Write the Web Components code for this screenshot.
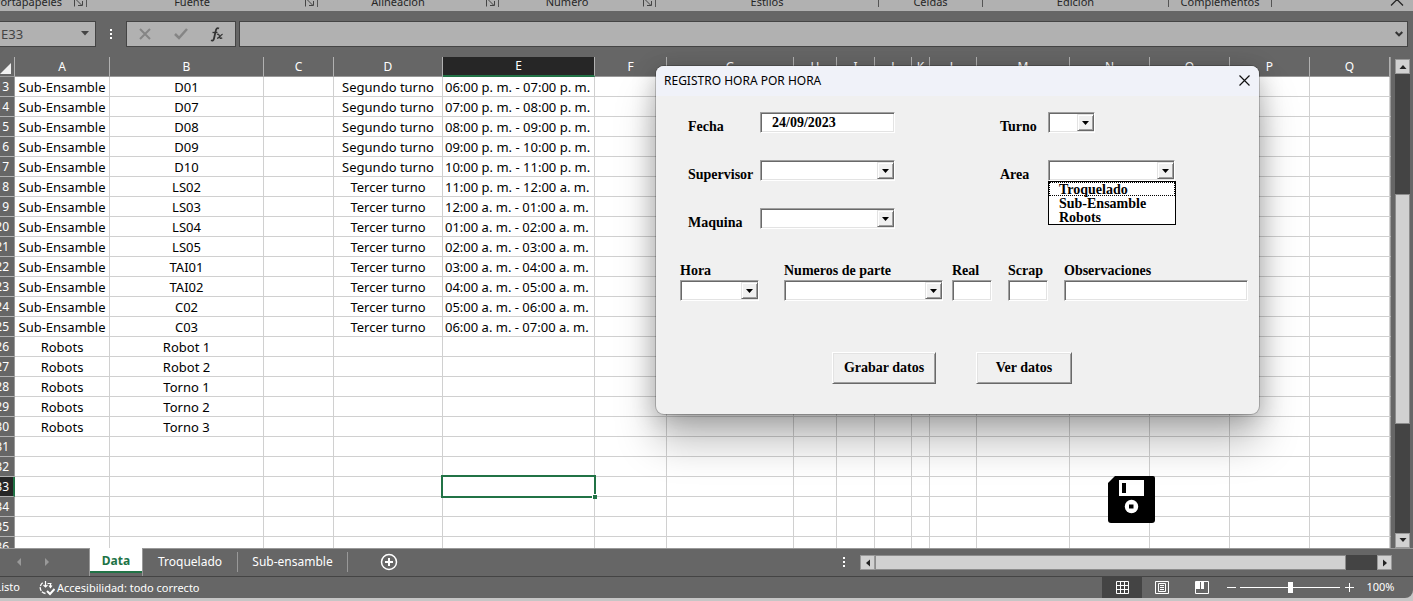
<!DOCTYPE html>
<html lang="es">
<head>
<meta charset="utf-8">
<title>Registro hora por hora</title>
<style>
  html, body { margin: 0; height: 100%; }
  body { background: #c6c6c6; overflow: hidden; font-family: "Noto Sans", "Open Sans", sans-serif; }
</style>
</head>
<body>
<xl-window>
  <xl-ribbon slot="ribbon">
    <xl-group style="--w:87px" launcher class="first">Portapapeles</xl-group>
    <xl-group style="--w:231px" launcher>Fuente</xl-group>
    <xl-group style="--w:181px" launcher>Alineación</xl-group>
    <xl-group style="--w:157px" launcher>Número</xl-group>
    <xl-group style="--w:223px">Estilos</xl-group>
    <xl-group style="--w:104px">Celdas</xl-group>
    <xl-group style="--w:186px">Edición</xl-group>
    <xl-group style="--w:103px">Complementos</xl-group>
  </xl-ribbon>
  <xl-formula-bar slot="formula"></xl-formula-bar>
  <xl-sheet slot="sheet"></xl-sheet>
  <xl-tabs slot="tabs"></xl-tabs>
  <xl-status slot="status"></xl-status>
  <user-form slot="dialog" heading="REGISTRO HORA POR HORA">
    <form-field slot="main" label="Fecha" kind="text" value="24/09/2023" style="--w:135px"></form-field>
    <form-field slot="main" label="Turno" kind="combo" style="--w:47px;--lw:48px"></form-field>
    <form-field slot="main" label="Supervisor" kind="combo" style="--w:135px"></form-field>
    <form-field slot="main" label="Area" kind="combo" options="Troquelado,Sub-Ensamble,Robots" style="--w:127px;--lw:48px"></form-field>
    <form-field slot="main" label="Maquina" kind="combo" style="--w:135px"></form-field>
    <form-field slot="row" stacked label="Hora" kind="combo" style="--w:79px"></form-field>
    <form-field slot="row" stacked label="Numeros de parte" kind="combo" style="--w:159px"></form-field>
    <form-field slot="row" stacked label="Real" kind="text" style="--w:40px"></form-field>
    <form-field slot="row" stacked label="Scrap" kind="text" style="--w:40px"></form-field>
    <form-field slot="row" stacked label="Observaciones" kind="text" style="--w:184px"></form-field>
    <form-button slot="actions" style="--w:104px">Grabar datos</form-button>
    <form-button slot="actions" style="--w:96px">Ver datos</form-button>
  </user-form>
</xl-window>

<script>
const define = (name, html, setup) => {
  const template = document.createElement('template');
  template.innerHTML = html;
  customElements.define(name, class extends HTMLElement {
    constructor() {
      super();
      this.attachShadow({ mode: 'open' }).append(template.content.cloneNode(true));
    }
    connectedCallback() {
      if (setup && !this.ready) { this.ready = true; setup(this, this.shadowRoot); }
    }
  });
};

define('xl-window', `
<style>
  :host { display: flex; flex-direction: column; height: calc(100vh - 3px); position: relative;
    background: #666; border-radius: 0 0 8px 0; overflow: hidden; }
  .sheet { flex: 1; min-height: 0; display: flex; }
  ::slotted([slot=sheet]) { flex: 1; min-width: 0; }
  ::slotted([slot=dialog]) { position: absolute; left: 656px; top: 66px; }
</style>
<slot name="ribbon"></slot>
<slot name="formula"></slot>
<div class="sheet"><slot name="sheet"></slot></div>
<slot name="tabs"></slot>
<slot name="status"></slot>
<slot name="dialog"></slot>`);

define('xl-ribbon', `
<style>
  :host { display: flex; align-items: flex-end; height: 11px; background: #b1b1b1; overflow: hidden; flex: none; }
  .grow { flex: 1; }
  button { all: unset; display: block; width: 24px; height: 8px; margin-right: 4px; align-self: flex-start; }
  svg { display: block; }
</style>
<slot></slot><span class="grow"></span>
<button aria-label="Contraer la cinta"><svg width="24" height="8"><path d="M6 5.500L12 -.5l6 6" fill="none" stroke="#262626" stroke-width="1.300"/></svg></button>`);

define('xl-group', `
<style>
  :host { display: flex; box-sizing: border-box; flex: none; width: var(--w); height: 18px; align-items: center;
    font-size: 11px; line-height: 16px; color: #262626; position: relative; }
  .label { flex: 1; text-align: center; white-space: nowrap; }
  :host(.first) .label { display: flex; justify-content: flex-end; width: 0; }
  button { all: unset; display: none; width: 20px; height: 20px; }
  :host([launcher]) button { display: block; }
  :host(.first) button { width: 24px; }
  :host(.first) svg { margin-left: 4px; }
  i { width: 1px; height: 7px; margin-bottom: 4px; align-self: flex-end; background: #555; }
  svg { display: block; }
</style>
<span class="label"><slot></slot></span>
<button aria-label="Más opciones"><svg width="20" height="20"><path d="M8.500 14.500V7M10.500 8l5 5M16.500 9v4.500H12" fill="none" stroke="#444"/></svg></button><i></i>`);

define('xl-formula-bar', `
<style>
  :host { display: flex; flex: none; height: 26px; padding: 10px 5px 10px 0; }
  .name { display: flex; width: 96px; box-sizing: border-box; background: #b1b1b1; border: 1px solid #444; border-left: 0;
    align-items: center; }
  input { all: unset; box-sizing: border-box; font-size: 13px; line-height: 20px; color: #444; min-width: 0; width: 75px; padding-left: 1px; }
  button { all: unset; display: grid; place-items: center; }
  .name button { width: 20px; height: 20px; }
  .dots { display: block; margin: 0 14px; }
  .tools { display: flex; box-sizing: border-box; width: 110px; background: #b1b1b1; border: 1px solid #444; align-items: center; justify-content: space-around; margin-right: 3px; }
  .tools button { width: 36px; height: 24px; }
  .field { display: flex; flex: 1; border: 1px solid #444; background: #b1b1b1; }
  .field input { flex: 1; }
  .field button { width: 16px; }
</style>
<div class="name"><input aria-label="Cuadro de nombres" value="E33"><button aria-label="Lista de nombres"><svg width="8" height="6"><path d="M0 0h8L4 4.500z" fill="#444"/></svg></button></div>
<svg class="dots" width="2" height="26"><path d="M0 9h2M0 13h2M0 17h2" stroke="#fff" stroke-width="2"/></svg>
<div class="tools">
  <button aria-label="Cancelar"><svg width="12" height="12"><path d="M1 1l10 10M11 1L1 11" stroke="#858585" stroke-width="2"/></svg></button>
  <button aria-label="Introducir"><svg width="14" height="12"><path d="M1 6l4 4 8-9" fill="none" stroke="#858585" stroke-width="2.500"/></svg></button>
  <button aria-label="Insertar función"><svg width="14" height="15" fill="none" stroke="#333"><path d="M9 1.500C7 .3 6 2 5.700 4L4 11.500C3.600 13.500 2.500 14 1 13.300" stroke-width="1.800"/><path d="M2.500 5.500h5" stroke-width="1.300"/><path d="M7 7.500c1.500-1 2 0 2.500 2s1.300 2.500 2.700 1.300M12.700 7.300c-2-.3-2.500 4-5.700 4" stroke-width="1.300"/></svg></button>
</div>
<div class="field"><input aria-label="Barra de fórmulas"><button aria-label="Expandir"><svg width="8" height="6"><path d="M.7 1L4 4.300 7.300 1" fill="none" stroke="#333" stroke-width="2"/></svg></button></div>`);

define('xl-scroll', `
<style>
  :host { display: flex; background: #444; box-sizing: border-box; }
  :host([vertical]) { flex-direction: column; width: 15px; }
  :host(:not([vertical])) { height: 15px; }
  button { all: unset; flex: none; box-sizing: border-box; width: 15px; height: 15px; background: #d1d1d1; border: 1px solid #999; display: grid; place-items: center; }
  .thumb { background: #d1d1d1; border: 1px solid #8c8c8c; box-sizing: border-box; flex: var(--size); }
  .a { flex: var(--before); } .b { flex: var(--after); }
  svg { display: block; }
  :host(:not([vertical])) svg { transform: rotate(-90deg); }
</style>
<button aria-label="Retroceder"><svg width="8" height="8"><path d="M.5 6h7L4 2z" fill="#222"/></svg></button>
<span class="a"></span><span class="thumb"></span><span class="b"></span>
<button aria-label="Avanzar"><svg width="8" height="8"><path d="M.5 2h7L4 6z" fill="#222"/></svg></button>`);

define('xl-sheet', `
<style>
  :host { display: flex; overflow: hidden; position: relative; }
  .view { flex: 1; min-width: 0; overflow: hidden; position: relative; }
  table { width: 100%; table-layout: fixed; border-collapse: separate; border-spacing: 0; font-size: 13px; line-height: 16px; }
  th, td { box-sizing: border-box; height: 20px; padding: 0; font-weight: 400; text-align: center; white-space: nowrap; overflow: hidden; }
  td { background: #fff; border-right: 1px solid #d0d0d0; border-bottom: 1px solid #d0d0d0; color: #000; padding-top: 1px; }
  td.left { text-align: left; padding-left: 2px; }
  thead th { background: #666; color: #fff; border-right: 1px solid #b1b1b1; border-bottom: 1px solid #999; font-size: 12px; }
  thead th.on { background: #262626; border-bottom: 2px solid #217346; }
  thead th:first-child svg { display: block; margin-top: 3px; }
  tbody th { background: #666; color: #fff; border-right: 1px solid #999; border-bottom: 1px solid #b1b1b1; font-size: 12px; }
  tbody th.on { background: #262626; border-right: 2px solid #217346; }
  th span { display: flex; justify-content: flex-end; padding: 1px 5px 0 0; }
  tbody th.on span { padding-right: 4px; }
  tr > :last-child { border-right-color: #999; }
  td.active { overflow: visible; position: relative; }
  td.active::before { content: ""; position: absolute; inset: -2px; border: 2px solid #217346; }
  td.active::after { content: ""; position: absolute; right: -3px; bottom: -3px; width: 4px; height: 4px; background: #217346; border: 1px solid #fff; border-right: 0; border-bottom: 0; }
  .disk { position: absolute; left: 1108px; top: 419px; }
  .side { display: flex; padding: 2px 3px 0 4px; }
</style>
<div class="view">
  <table><colgroup></colgroup><thead><tr></tr></thead><tbody></tbody></table>
  <svg class="disk" width="47" height="47" role="img" aria-label="Guardar"><path d="M7 0H45a2 2 0 0 1 2 2V44a3 3 0 0 1-3 3H3a3 3 0 0 1-3-3V7z"/><path d="M11 4h25v16H11z" fill="#fff"/><path d="M14 7h4v10h-4z"/><circle cx="23.500" cy="30.500" r="6.700" fill="#fff"/><path d="M21 28.500h4.500v4H21z"/></svg>
</div>
<div class="side"><xl-scroll vertical style="--before:121;--size:229;--after:110"></xl-scroll></div>`,
(host, root) => {
  const widths = [15, 95, 154, 70, 109, 152, 72, 127, 43, 38, 37, 18, 47, 93, 80, 80, 80, 80];
  root.querySelector('colgroup').innerHTML = widths.map(w => `<col style="width:${w}px">`).join('') + '<col>';
  const letters = 'ABCDEFGHIJKLMNOPQ'.split('');
  root.querySelector('thead tr').innerHTML =
    '<th><svg width="12" height="13"><path d="M11 1v11H0z" fill="#f0f0f0"/></svg></th>' +
    letters.map(l => `<th scope="col"${l === 'E' ? ' class="on"' : ''}>${l}</th>`).join('') + '<th></th>';
  const machines = ['D01', 'D07', 'D08', 'D09', 'D10', 'LS02', 'LS03', 'LS04', 'LS05', 'TAI01', 'TAI02', 'C02', 'C03',
    'Robot 1', 'Robot 2', 'Torno 1', 'Torno 2', 'Torno 3'];
  const hour = h => `${String((h + 11) % 12 + 1).padStart(2, '0')}:00 ${h % 24 < 12 ? 'a' : 'p'}. m.`;
  let rows = '';
  for (let n = 13; n <= 36; n++) {
    const i = n - 13, cells = Array(letters.length + 1).fill('');
    if (machines[i]) { cells[0] = i < 13 ? 'Sub-Ensamble' : 'Robots'; cells[1] = machines[i]; }
    if (i < 13) { cells[3] = i < 5 ? 'Segundo turno' : 'Tercer turno'; cells[4] = `${hour(18 + i)} - ${hour(19 + i)}`; }
    rows += `<tr><th scope="row"${n === 33 ? ' class="on"' : ''}><span>${n}</span></th>` +
      cells.map((c, k) => `<td${k === 4 ? ` class="${n === 33 ? 'active' : 'left'}"` : ''}>${c}</td>`).join('') + '</tr>';
  }
  root.querySelector('tbody').innerHTML = rows;
});

define('xl-tabs', `
<style>
  :host { display: flex; flex: none; height: 28px; box-sizing: border-box; color: #fff; font-size: 12px; line-height: 20px; }
  .line { border-top: 1px solid #999; display: flex; box-sizing: border-box; }
  button { all: unset; display: block; text-align: center; white-space: nowrap; box-sizing: border-box; }
  .nav { width: 90px; padding: 5px 0 0 12px; gap: 14px; border-right: 1px solid #999; }
  .nav button { width: 14px; height: 18px; }
  .active { width: 52px; height: 25px; background: #fff; color: #217346; font-weight: 700; border-bottom: 2px solid #217346; padding-top: 3px; }
  .rest { flex: 1; padding-top: 3px; border-left: 1px solid #999; }
  .rest .tab { height: 20px; border-right: 1px solid #999; }
  .plus { width: 18px; height: 20px; margin-left: 32px; }
  .grow { flex: 1; }
  .dots { margin-right: 15px; }
  xl-scroll { width: 532px; margin: 3px 21px 0 0; }
  svg { display: block; }
</style>
<div class="line nav"><button aria-label="Hoja anterior"><svg width="14" height="18"><path d="M9 4v8L5 8z" fill="#999"/></svg></button><button aria-label="Hoja siguiente"><svg width="14" height="18"><path d="M5 4v8l4-4z" fill="#999"/></svg></button></div>
<button class="active">Data</button>
<div class="line rest">
  <button class="tab" style="width:95px">Troquelado</button>
  <button class="tab" style="width:110px">Sub-ensamble</button>
  <button class="plus" aria-label="Hoja nueva"><svg width="18" height="20"><circle cx="9" cy="10" r="7.500" fill="none" stroke="#fff" stroke-width="1.500"/><path d="M9 6v8M5 10h8" stroke="#fff" stroke-width="2"/></svg></button>
  <span class="grow"></span>
  <svg class="dots" width="2" height="20"><path d="M0 6h2M0 10h2M0 14h2" stroke="#fff" stroke-width="2"/></svg>
  <xl-scroll style="--before:0;--size:471;--after:31"></xl-scroll>
</div>`);

define('xl-status', `
<style>
  :host { display: flex; flex: none; height: 22px; box-sizing: border-box; border-top: 1px solid #444; color: #fff; font-size: 11px; line-height: 20px; align-items: stretch; }
  .ready { width: 20px; display: flex; justify-content: flex-end; margin-right: 18px; }
  .acc { display: flex; gap: 2px; align-items: center; white-space: nowrap; }
  .grow { flex: 1; }
  button { all: unset; display: grid; place-items: center; width: 40px; }
  .on { background: #444; }
  button.step { width: 18px; }
  input { appearance: none; width: 100px; height: 12px; margin: 4px 0; background: linear-gradient(#fff, #fff) center / 100% 1px no-repeat; }
  input::-webkit-slider-thumb { appearance: none; width: 5px; height: 11px; background: #fff; border: 0; }
  .zoom { width: 45px; padding-right: 10px; text-align: center; }
</style>
<span class="ready">Listo</span>
<span class="acc"><svg width="17" height="16" fill="none" stroke="#fff"><path d="M7.500 13.500A6 6 0 0 1 5 2.500" stroke-dasharray="4 1" stroke-width="1.300"/><path d="M7.500 1v6M5.500 5l2 2 2-2M9.500 3.500h4M12.500 3v4M11 5.500l1.500 2 1.500-2" stroke-width="1.200"/><path d="M9 11l3 3 4.500-5" stroke-width="2"/></svg>Accesibilidad: todo correcto</span>
<span class="grow"></span>
<button class="on" aria-label="Normal"><svg width="13" height="13" fill="none" stroke="#fff"><path d="M.5.5h12v12H.5zM4.500 0v13M8.500 0v13M0 4.500h13M0 8.500h13"/></svg></button>
<button aria-label="Diseño de página"><svg width="14" height="13" fill="none" stroke="#fff"><path d="M.5.5h13v12H.5zM3.500 2.500h7v8h-7zM5 4.500h4M5 6.500h4M5 8.500h4"/></svg></button>
<button aria-label="Vista previa de salto de página"><svg width="14" height="13" fill="none" stroke="#fff"><path d="M.5.5h13v12H.5z"/><path d="M1 1h4v7H1zM6 1h3v7H6z" fill="#fff" stroke="none"/></svg></button>
<button class="step" aria-label="Alejar"><svg width="9" height="9"><path d="M0 4.500h9" stroke="#fff"/></svg></button>
<input type="range" aria-label="Zoom" min="0" max="100" value="50">
<button class="step" aria-label="Acercar"><svg width="9" height="9"><path d="M0 4.500h9M4.500 0v9" stroke="#fff"/></svg></button>
<span class="zoom">100%</span>`);

define('user-form', `
<style>
  :host { display: block; width: 603px; background: #f0f0f0; border-radius: 8px; font-size: 14px; line-height: 16px;
    box-shadow: 0 0 0 1px rgba(0,0,0,.2), 0 28px 40px rgba(0,0,0,.26), 0 4px 24px rgba(0,0,0,.22); }
  header { display: flex; height: 30px; align-items: center; background: #f0f2f9; border-radius: 8px 8px 0 0; padding: 0 3px 0 8px; }
  h1 { flex: 1; margin: 0; font-size: 12px; line-height: 16px; font-weight: 400; color: #000; }
  header button { all: unset; display: grid; place-items: center; width: 24px; height: 26px; margin-bottom: 2px; }
  .body { font-family: "Liberation Serif", serif; font-weight: 700; color: #000; padding-bottom: 30px; }
  .main { display: grid; grid-template-columns: 312px 1fr; grid-auto-rows: 48px; padding: 16px 0 0 32px; }
  .row { display: grid; grid-template-columns: 104px 168px 56px 56px 1fr; padding: 6px 0 0 24px; }
  .actions { display: flex; gap: 40px; padding: 51px 0 0 176px; }
</style>
<header><h1></h1><button aria-label="Cerrar"><svg width="11" height="11"><path d="M.5.5l10 10M10.500.5l-10 10" stroke="#111" stroke-width="1.200"/></svg></button></header>
<div class="body">
  <div class="main"><slot name="main"></slot></div>
  <div class="row"><slot name="row"></slot></div>
  <div class="actions"><slot name="actions"></slot></div>
</div>`, (host, root) => { root.querySelector('h1').textContent = host.getAttribute('heading'); });

define('form-field', `
<style>
  :host { display: flex; align-items: flex-start; }
  :host([stacked]) { flex-direction: column; }
  label { flex: none; box-sizing: border-box; width: var(--lw, 72px); padding-top: 7px; white-space: nowrap; }
  :host([stacked]) label { padding-top: 1px; width: auto; height: 18px; }
  .box { position: relative; width: var(--w); height: 21px; flex: none; }
  .box > input, .box > select.combo { appearance: none; display: block; box-sizing: border-box; width: 100%; height: 21px; margin: 0; padding: 0 10px 0 11px;
    background: #fff; border: 1px solid; border-color: #a0a0a0 #fff #fff #a0a0a0; border-radius: 0;
    box-shadow: inset 1px 1px #696969, inset -1px -1px #e3e3e3; font: inherit; color: #000; outline: 0; }
  .arrow { position: absolute; right: 1px; top: 2px; width: 17px; height: 17px; box-sizing: border-box; background: #f0f0f0; pointer-events: none;
    border: 1px solid; border-color: #e3e3e3 #696969 #696969 #e3e3e3; box-shadow: inset 1px 1px #fff, inset -1px -1px #a0a0a0; display: grid; place-items: center; }
  .list { position: absolute; left: 0; top: 21px; width: 128px; height: 44px; box-sizing: border-box; border: 1px solid #000; border-radius: 0;
    background: #fff; padding: 0; margin: 0; font: inherit; color: #000; overflow: hidden; outline: 0; }
  .list option { box-sizing: border-box; height: 14px; min-height: 14px; font-weight: 700; line-height: 13px; padding: 0 0 0 10px; }
  .list option:first-child { outline: 1px dotted #000; outline-offset: -1px; }
</style>
<label for="control"></label><div class="box"></div>`,
(host, root) => {
  const name = host.getAttribute('label'), box = root.querySelector('.box');
  root.querySelector('label').textContent = name;
  if (host.getAttribute('kind') === 'text') {
    box.innerHTML = '<input id="control" type="text">';
    box.firstChild.value = host.getAttribute('value') || '';
    return;
  }
  box.innerHTML = '<select id="control" class="combo"></select><span class="arrow"><svg width="7" height="4"><path d="M0 0h7L3.500 4z"/></svg></span>';
  const options = host.getAttribute('options');
  if (options) {
    box.insertAdjacentHTML('beforeend', `<select class="list" size="3" aria-label="${name}">` +
      options.split(',').map(o => `<option>${o}</option>`).join('') + '</select>');
  }
});

define('form-button', `
<style>
  :host { display: block; width: var(--w); }
  button { display: block; width: 100%; height: 32px; box-sizing: border-box; padding: 0; font: inherit; color: #000; background: #f0f0f0; border-radius: 0;
    border: 1px solid; border-color: #fff #696969 #696969 #fff; box-shadow: inset 1px 1px #e3e3e3, inset -1px -1px #a0a0a0; }
</style>
<button type="button"><slot></slot></button>`);
</script>
</body>
</html>
